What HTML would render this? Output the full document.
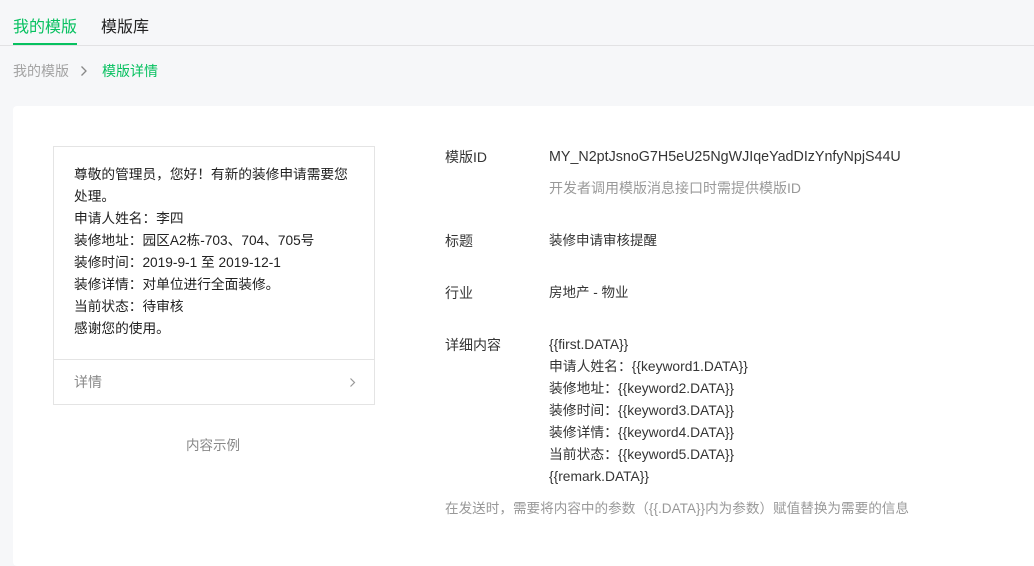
<!DOCTYPE html>
<html><head><meta charset="utf-8"><style>
*{margin:0;padding:0;box-sizing:border-box}
body{width:1034px;height:560px;overflow:hidden;background:#f6f7f9;font-family:"Liberation Sans","Noto Sans CJK SC",sans-serif;font-size:14px;color:#353535;position:relative}
.a{position:absolute;white-space:nowrap}
</style></head><body>
<div class="a" style="left:0;top:45px;width:1034px;height:1px;background:#e2e2e4"></div>
<div class="a" style="left:13px;top:17px;font-size:16px;line-height:22px;color:#07c160">我的模版</div>
<div class="a" style="left:13px;top:43px;width:64px;height:2px;background:#07c160"></div>
<div class="a" style="left:101px;top:17px;font-size:16px;line-height:22px;color:#222">模版库</div>
<div class="a" style="left:13px;top:62px;font-size:14px;line-height:18px;color:#a3a3a3">我的模版</div>
<svg class="a" style="left:80px;top:65px" width="8" height="12" viewBox="0 0 8 12"><path d="M1.5 1.5 L6 6 L1.5 10.5" fill="none" stroke="#888" stroke-width="1.3"/></svg>
<div class="a" style="left:102px;top:62px;font-size:14px;line-height:18px;color:#07c160">模版详情</div>
<div class="a" style="left:13px;top:106px;width:1030px;height:460px;background:#fff;border-radius:4px"></div>
<div class="a" style="left:53px;top:146px;width:322px;height:259px;border:1px solid #e4e4e4;background:#fff"></div>
<div class="a" style="left:74px;top:164px;line-height:22px;font-size:13.7px;color:#222">尊敬的管理员，您好！有新的装修申请需要您<br>处理。<br>申请人姓名：李四<br>装修地址：园区A2栋-703、704、705号<br>装修时间：2019-9-1 至 2019-12-1<br>装修详情：对单位进行全面装修。<br>当前状态：待审核<br>感谢您的使用。</div>
<div class="a" style="left:54px;top:359px;width:320px;height:1px;background:#e4e4e4"></div>
<div class="a" style="left:74px;top:372px;line-height:20px;color:#888">详情</div>
<svg class="a" style="left:349px;top:377px" width="7" height="11" viewBox="0 0 7 11"><path d="M1.5 1.5 L5.5 5.5 L1.5 9.5" fill="none" stroke="#999" stroke-width="1.2"/></svg>
<div class="a" style="left:186px;top:436px;line-height:20px;font-size:13.5px;color:#888">内容示例</div>
<div class="a" style="left:445px;top:147px;line-height:20px">模版ID</div>
<div class="a" style="left:549px;top:147px;line-height:20px;font-size:14.3px">MY_N2ptJsnoG7H5eU25NgWJIqeYadDIzYnfyNpjS44U</div>
<div class="a" style="left:549px;top:178px;line-height:20px;color:#999">开发者调用模版消息接口时需提供模版ID</div>
<div class="a" style="left:445px;top:231px;line-height:20px">标题</div>
<div class="a" style="left:549px;top:231px;line-height:20px;font-size:13.5px">装修申请审核提醒</div>
<div class="a" style="left:445px;top:283px;line-height:20px">行业</div>
<div class="a" style="left:549px;top:283px;line-height:20px;font-size:13.5px">房地产 - 物业</div>
<div class="a" style="left:445px;top:335px;line-height:20px">详细内容</div>
<div class="a" style="left:549px;top:334px;line-height:22px;font-size:13.8px">{{first.DATA}}<br>申请人姓名：{{keyword1.DATA}}<br>装修地址：{{keyword2.DATA}}<br>装修时间：{{keyword3.DATA}}<br>装修详情：{{keyword4.DATA}}<br>当前状态：{{keyword5.DATA}}<br>{{remark.DATA}}</div>
<div class="a" style="left:445px;top:499px;line-height:20px;font-size:13.6px;color:#999">在发送时，需要将内容中的参数（{{.DATA}}内为参数）赋值替换为需要的信息</div>
</body></html>
